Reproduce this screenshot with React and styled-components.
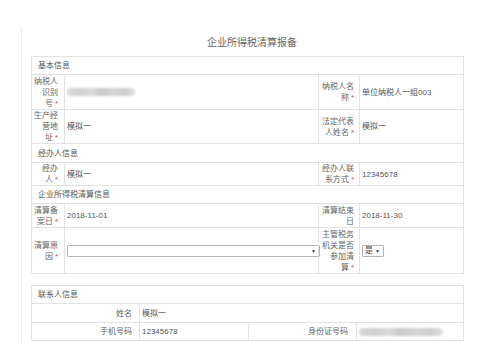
import styled, { createGlobalStyle } from "styled-components";

const GlobalStyle = createGlobalStyle`
  html, body {
    margin: 0;
    padding: 0;
    background: #fff;
  }
  body {
    font-family: "Liberation Sans", "Noto Sans CJK SC", sans-serif;
    font-size: 8px;
    color: #555;
  }
`;

const StyledPage = styled.div`
  padding: 28px 0 0 21px;
`;

const StyledPanel = styled.div`
  width: 452px;
  border-left: 1px solid #e9edf5;
  padding: 0 0 3px 9px;
`;

const StyledTitle = styled.h2`
  margin: 0;
  height: 28px;
  width: 432px;
  padding-left: 10px;
  box-sizing: border-box;
  text-align: center;
  font-size: 10px;
  font-weight: normal;
  line-height: 30px;
  color: #666;
`;

const StyledTable = styled.table`
  width: 432px;
  table-layout: fixed;
  border-collapse: collapse;
  margin-bottom: ${(p) => p.$gap || 0}px;

  td {
    border: 1px solid #e2e2e2;
    padding: 0;
    line-height: 11px;
    vertical-align: middle;
  }
`;

const StyledCol = styled.col`
  width: ${(p) => p.$w}px;
`;

const StyledRow = styled.tr`
  height: ${(p) => p.$h}px;
`;

const StyledSection = styled.td`
  && {
    padding-left: 6px;
    color: #555;
  }
`;

const StyledLabel = styled.td`
  && {
    text-align: right;
    color: #666;
    padding: 0 ${(p) => p.$right || 6}px 0 ${(p) => p.$left || 2}px;
  }
`;

const StyledValue = styled.td`
  && {
    padding-left: 2px;
    color: #555;
  }
`;

const StyledKeep = styled.span`
  white-space: nowrap;
`;

const StyledStar = styled.span`
  color: #f33;
  margin-left: 2px;
`;

const StyledBlur = styled.div`
  width: ${(p) => p.$w}px;
  height: 8px;
  border-radius: 4px;
  background: linear-gradient(
    90deg,
    #d9d9d9 0%,
    #cfcfcf 20%,
    #dcdcdc 35%,
    #c9c9c9 50%,
    #d6d6d6 70%,
    #cdcdcd 85%,
    #e2e2e2 100%
  );
  filter: blur(1.2px);
`;

const StyledSelect = styled.div`
  display: flex;
  align-items: center;
  justify-content: space-between;
  box-sizing: border-box;
  width: ${(p) => p.$w}px;
  height: 12px;
  border: 1px solid #b5b5b5;
  border-radius: 1px;
  background: #fff;
  padding: 0 3px 0 2px;
  color: #444;
  line-height: 10px;
`;

const StyledArrow = styled.span`
  font-size: 5px;
  color: #333;
`;

const Label = ({ text, star, wide }) => {
  const head = text.slice(0, -1);
  const last = text.slice(-1);
  return (
    <StyledLabel $left={wide ? 3 : 2} $right={wide ? 5 : 6}>
      {head}
      <StyledKeep>
        {last}
        {star && <StyledStar>*</StyledStar>}
      </StyledKeep>
    </StyledLabel>
  );
};

const Select = ({ width, value }) => (
  <StyledSelect $w={width}>
    <span>{value}</span>
    <StyledArrow>▼</StyledArrow>
  </StyledSelect>
);

const App = () => {
  return (
    <StyledPage>
      <GlobalStyle />
      <StyledPanel>
        <StyledTitle>企业所得税清算报备</StyledTitle>
        <StyledTable $gap={11}>
          <colgroup>
            <StyledCol $w={33} />
            <StyledCol $w={254} />
            <StyledCol $w={41} />
            <StyledCol $w={104} />
          </colgroup>
          <tbody>
            <StyledRow $h={18}>
              <StyledSection colSpan={4}>基本信息</StyledSection>
            </StyledRow>
            <StyledRow $h={35}>
              <Label text="纳税人识别号" star />
              <StyledValue>
                <StyledBlur $w={68} />
              </StyledValue>
              <Label text="纳税人名称" star wide />
              <StyledValue>单位纳税人一组003</StyledValue>
            </StyledRow>
            <StyledRow $h={34}>
              <Label text="生产经营地址" star />
              <StyledValue>模拟一</StyledValue>
              <Label text="法定代表人姓名" star wide />
              <StyledValue>模拟一</StyledValue>
            </StyledRow>
            <StyledRow $h={19}>
              <StyledSection colSpan={4}>经办人信息</StyledSection>
            </StyledRow>
            <StyledRow $h={23}>
              <Label text="经办人" star />
              <StyledValue>模拟一</StyledValue>
              <Label text="经办人联系方式" star wide />
              <StyledValue>12345678</StyledValue>
            </StyledRow>
            <StyledRow $h={18}>
              <StyledSection colSpan={4}>企业所得税清算信息</StyledSection>
            </StyledRow>
            <StyledRow $h={24}>
              <Label text="清算备案日" star />
              <StyledValue>2018-11-01</StyledValue>
              <Label text="清算结束日" wide />
              <StyledValue>2018-11-30</StyledValue>
            </StyledRow>
            <StyledRow $h={46}>
              <Label text="清算原因" star />
              <StyledValue>
                <Select width={253} />
              </StyledValue>
              <Label text="主管税务机关是否参加清算" star wide />
              <StyledValue>
                <Select width={22} value="是" />
              </StyledValue>
            </StyledRow>
          </tbody>
        </StyledTable>
        <StyledTable>
          <colgroup>
            <StyledCol $w={108} />
            <StyledCol $w={109} />
            <StyledCol $w={108} />
            <StyledCol $w={107} />
          </colgroup>
          <tbody>
            <StyledRow $h={18}>
              <StyledSection colSpan={4}>联系人信息</StyledSection>
            </StyledRow>
            <StyledRow $h={19}>
              <StyledLabel $right={7}>姓名</StyledLabel>
              <StyledValue colSpan={3}>模拟一</StyledValue>
            </StyledRow>
            <StyledRow $h={18}>
              <StyledLabel $right={7}>手机号码</StyledLabel>
              <StyledValue>12345678</StyledValue>
              <StyledLabel $right={8}>身份证号码</StyledLabel>
              <StyledValue>
                <StyledBlur $w={84} />
              </StyledValue>
            </StyledRow>
          </tbody>
        </StyledTable>
      </StyledPanel>
    </StyledPage>
  );
};

export default App;
